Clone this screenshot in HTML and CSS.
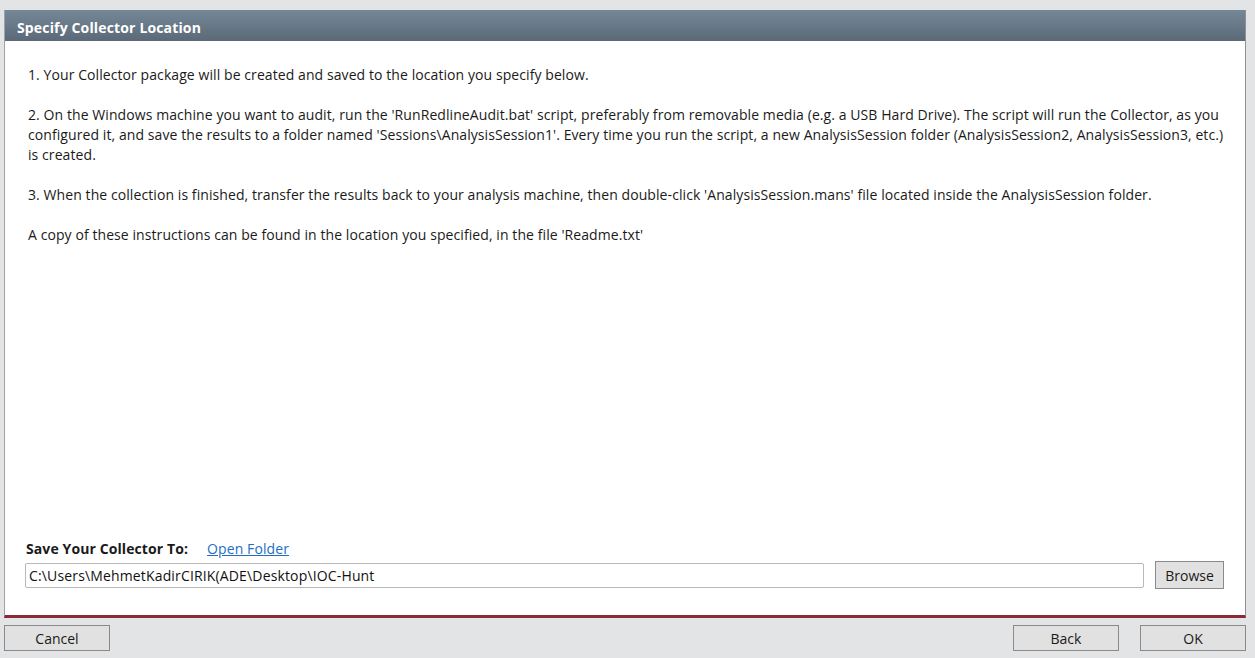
FILE: index.html
```html
<!DOCTYPE html>
<html>
<head>
<meta charset="utf-8">
<link rel="stylesheet" href="styles.css">
</head>
<body>
<div class="page">
  <div class="panel">
    <div class="header">Specify Collector Location</div>
    <div class="body">
      <div class="instructions">
        <p>1. Your Collector package will be created and saved to the location you specify below.</p>
        <p>2. On the Windows machine you want to audit, run the 'RunRedlineAudit.bat' script, preferably from removable media (e.g. a USB Hard Drive). The script will run the Collector, as you<br>configured it, and save the results to a folder named 'Sessions\AnalysisSession1'. Every time you run the script, a new AnalysisSession folder (AnalysisSession2, AnalysisSession3, etc.)<br>is created.</p>
        <p>3. When the collection is finished, transfer the results back to your analysis machine, then double-click 'AnalysisSession.mans' file located inside the AnalysisSession folder.</p>
        <p>A copy of these instructions can be found in the location you specified, in the file 'Readme.txt'</p>
      </div>
      <div class="save">
        <div class="save-label-row">
          <span class="save-label">Save Your Collector To:</span>
          <a class="link" href="#">Open Folder</a>
        </div>
        <div class="path-row">
          <div class="path-input">C:\Users\MehmetKadirCIRIK(ADE\Desktop\IOC-Hunt</div>
          <button class="btn browse">Browse</button>
        </div>
      </div>
    </div>
  </div>
  <div class="footer">
    <button class="btn foot">Cancel</button>
    <div class="spacer"></div>
    <button class="btn foot">Back</button>
    <button class="btn foot">OK</button>
  </div>
</div>
</body>
</html>
```
FILE: styles.css
```css
html, body {
  margin: 0;
  padding: 0;
  background: #e3e4e5;
  width: 1255px;
  height: 658px;
  overflow: hidden;
}
body {
  font-family: "Open Sans", "Noto Sans", sans-serif;
  color: #1a1a1a;
}
.page {
  display: flex;
  flex-direction: column;
  padding: 10px 9px 0 4px;
  height: 658px;
  box-sizing: border-box;
}
.panel {
  height: 608px;
  display: flex;
  flex-direction: column;
  background: #fff;
  border-left: 1px solid #a0a3a6;
  border-right: 1px solid #8e9194;
  border-bottom: 3px solid #8a2a38;
  box-sizing: border-box;
}
.header {
  height: 27px;
  padding-top: 4px;
  flex: none;
  background: linear-gradient(#758898, #5b6977);
  color: #fff;
  font-weight: bold;
  font-size: 14px;
  letter-spacing: 0.15px;
  line-height: 27px;
  padding-left: 12px;
}
.body {
  flex: 1;
  display: flex;
  flex-direction: column;
  padding: 0 20px 0 20px;
}
.instructions {
  flex: 1;
  padding: 24px 0 0 3px;
  font-size: 14px;
  line-height: 20px;
  letter-spacing: 0.08px;
}
.instructions p {
  margin: 0 0 20px 0;
  white-space: nowrap;
}
.save {
  padding-bottom: 26px;
}
.save-label-row {
  display: flex;
  align-items: center;
  gap: 19px;
  height: 20px;
  font-size: 14px;
  letter-spacing: 0.1px;
}
.save-label {
  font-weight: bold;
  padding-left: 1px;
}
.link {
  color: #1f6ec4;
  text-decoration: underline;
}
.path-row {
  display: flex;
  align-items: flex-start;
  margin-top: 5px;
  gap: 11px;
}
.path-input {
  width: 1119px;
  height: 25px;
  box-sizing: border-box;
  border: 1px solid #b9b9b9;
  border-radius: 2px;
  font-size: 14px;
  letter-spacing: 0.15px;
  line-height: 23px;
  padding-left: 3px;
  color: #111;
}
.btn {
  font-family: inherit;
  font-size: 14px;
  color: #1a1a1a;
  background: #e1e1e1;
  border: 1px solid #8a8a8a;
  border-radius: 0;
  padding: 0;
}
.browse {
  width: 69px;
  height: 28px;
  margin-top: -2px;
}
.footer {
  display: flex;
  margin-top: 7px;
  gap: 21px;
}
.spacer {
  flex: 1;
}
.foot {
  width: 106px;
  height: 26px;
}
```
